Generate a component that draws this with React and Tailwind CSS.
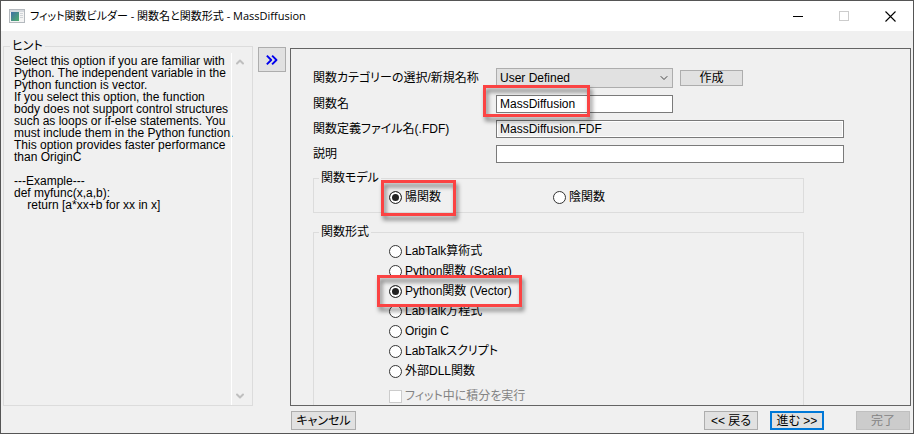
import { useState } from 'react'
import { ChevronDown, ChevronUp, ChevronsRight } from 'lucide-react'

const hint = `Select this option if you are familiar with
Python. The independent variable in the
Python function is vector.
If you select this option, the function
body does not support control structures
such as loops or if-else statements. You
must include them in the Python function.
This option provides faster performance
than OriginC

---Example---
def myfunc(x,a,b):
    return [a*xx+b for xx in x]`

const models = [
  { id: 'explicit', label: '陽関数', mark: true },
  { id: 'implicit', label: '陰関数' }
]

const forms = [
  { id: 'labtalk-expr', label: 'LabTalk算術式' },
  { id: 'py-scalar', label: 'Python関数 (Scalar)' },
  { id: 'py-vector', label: 'Python関数 (Vector)', mark: true },
  { id: 'labtalk-eq', label: 'LabTalk方程式' },
  { id: 'origin-c', label: 'Origin C' },
  { id: 'labtalk-script', label: 'LabTalkスクリプト' },
  { id: 'dll', label: '外部DLL関数' }
]

// red callout frame, sits over the control it points at
function Mark({ className }) {
  return (
    <span className={`absolute z-10 pointer-events-none border-3 border-[#fb4343] drop-shadow-[2px_4px_2px_rgba(0,0,0,0.5)] ${className}`} />
  )
}

function Radio({ name, label, checked, onChange, children }) {
  return (
    <label className="relative flex items-center gap-[3px] whitespace-nowrap">
      <input
        type="radio"
        name={name}
        checked={checked}
        onChange={onChange}
        className="appearance-none size-[13px] shrink-0 rounded-full border border-[#333333] bg-white checked:bg-[#222222] checked:shadow-[inset_0_0_0_2px_white]"
      />
      {label}
      {children}
    </label>
  )
}

function TitleBar() {
  return (
    <header className="flex h-[30px] shrink-0 items-center bg-white pl-2">
      <svg width="16" height="14" viewBox="0 0 16 14" className="mr-[5px] shrink-0">
        <defs>
          <linearGradient id="app" x1="0" y1="0" x2="1" y2="1">
            <stop offset="0" stopColor="#3f6fa6" />
            <stop offset="1" stopColor="#4fae6b" />
          </linearGradient>
        </defs>
        <rect x="0.5" y="0.5" width="15" height="13" fill="#f4f4f4" stroke="#b4b9be" />
        <rect x="1" y="1" width="14" height="2" fill="#d5d9de" />
        <rect x="2" y="3" width="8" height="9" fill="url(#app)" />
        <path d="M11 4.5h3M11 6.5h3M11 8.5h3" stroke="#d0d4d8" />
      </svg>
      <h1 className="flex-1 truncate font-['Open_Sans','Noto_Sans_CJK_JP',sans-serif] text-[11px]">
        フィット関数ビルダー - 関数名と関数形式 - MassDiffusion
      </h1>
      <button aria-label="最小化" className="flex h-full w-[46px] items-center justify-center">
        <svg width="10" height="10" viewBox="0 0 10 10"><path d="M0 5.5h10" stroke="black" /></svg>
      </button>
      <button aria-label="最大化" disabled className="flex h-full w-[46px] items-center justify-center">
        <svg width="10" height="10" viewBox="0 0 10 10"><rect x="0.5" y="0.5" width="9" height="9" fill="none" stroke="#cccccc" /></svg>
      </button>
      <button aria-label="閉じる" className="flex h-full w-[46px] items-center justify-center">
        <svg width="11" height="11" viewBox="0 0 11 11"><path d="M0.5 0.5l10 10M10.5 0.5l-10 10" stroke="black" strokeWidth="1.1" /></svg>
      </button>
    </header>
  )
}

export default function App() {
  const [category, setCategory] = useState('User Defined')
  const [name, setName] = useState('MassDiffusion')
  const [description, setDescription] = useState('')
  const [model, setModel] = useState('explicit')
  const [form, setForm] = useState('py-vector')

  return (
    <div className="flex h-screen flex-col overflow-hidden border border-[#555555] bg-[#f0f0f0] font-['Liberation_Sans','Noto_Sans_CJK_JP',sans-serif] text-xs leading-[14px] text-black [font-feature-settings:'palt']">
      <TitleBar />

      <main className="flex min-h-0 flex-1 px-[2px] pt-2">
        <fieldset className="flex w-[250px] min-w-0 shrink-0 border border-[#dcdcdc]">
          <legend className="ml-[6px] px-[2px]">ヒント</legend>
          <p className="min-w-0 flex-1 whitespace-pre pl-[10px] pt-[2px] leading-3">{hint}</p>
          <div className="flex w-[21px] shrink-0 flex-col items-center justify-between border-l border-white py-[3px] pr-1 text-[#bfbfbf]">
            <ChevronUp size={12} strokeWidth={4} />
            <ChevronDown size={12} strokeWidth={4} />
          </div>
        </fieldset>

        <button aria-label="ヒントを切り替え" className="ml-[5px] mt-2 flex h-[25px] w-7 shrink-0 items-center justify-center border border-[#adadad] bg-[#e1e1e1] text-[#0000ee]">
          <ChevronsRight size={18} strokeWidth={2.5} strokeLinecap="square" />
        </button>

        <section className="ml-1 mt-[9px] min-w-0 flex-1 overflow-hidden border border-[#646464] pl-[22px] pr-[66px] pt-[19px]">
          <div className="grid grid-cols-[183px_1fr] items-center gap-y-[7px]">
            <label htmlFor="category">関数カテゴリーの選択/新規名称</label>
            <div className="flex items-center gap-[7px]">
              <div className="relative">
                <select
                  id="category"
                  value={category}
                  onChange={e => setCategory(e.target.value)}
                  className="block h-5 w-[177px] appearance-none border border-[#adadad] bg-[#e1e1e1] pl-[3px]">
                  <option>User Defined</option>
                </select>
                <ChevronDown size={12} strokeWidth={2} className="pointer-events-none absolute right-[3px] top-1 text-[#444444]" />
              </div>
              <button className="flex h-4 w-[63px] items-center justify-center border border-[#adadad] bg-[#e1e1e1]">作成</button>
            </div>

            <label htmlFor="name">関数名</label>
            <div className="relative">
              <input
                id="name"
                value={name}
                onChange={e => setName(e.target.value)}
                className="block h-[18px] w-[177px] border border-[#7a7a7a] bg-white px-[3px]"
              />
              <Mark className="-left-[13px] -top-[10px] h-8 w-[107px]" />
            </div>

            <label htmlFor="fdf">関数定義ファイル名(.FDF)</label>
            <input
              id="fdf"
              readOnly
              value={`${name}.FDF`}
              className="block h-[18px] w-full border border-[#7a7a7a] px-[3px] shadow-[inset_0_0_0_1px_white]"
            />

            <label htmlFor="description">説明</label>
            <input
              id="description"
              value={description}
              onChange={e => setDescription(e.target.value)}
              className="block h-[18px] w-full border border-[#7a7a7a] bg-white px-[3px]"
            />
          </div>

          <fieldset className="mr-10 mt-2 border border-[#dcdcdc] pb-2 pl-[75px] pt-[5px]">
            <legend className="-ml-[70px] px-[2px]">関数モデル</legend>
            <div className="grid grid-cols-[164px_1fr]">
              {models.map(m => (
                <Radio key={m.id} name="model" label={m.label} checked={model === m.id} onChange={() => setModel(m.id)}>
                  {m.mark && <Mark className="-left-2 -top-[10px] h-9 w-[75px]" />}
                </Radio>
              ))}
            </div>
          </fieldset>

          <fieldset className="mr-10 mt-3 border border-[#dcdcdc] pb-5 pl-[75px] pt-[2px]">
            <legend className="-ml-[70px] px-[2px]">関数形式</legend>
            <div className="grid auto-rows-[20px]">
              {forms.map(f => (
                <Radio key={f.id} name="form" label={f.label} checked={form === f.id} onChange={() => setForm(f.id)}>
                  {f.mark && <Mark className="-left-3 -top-[6px] h-8 w-[145px]" />}
                </Radio>
              ))}
            </div>
            <label className="mt-[5px] flex h-5 items-center gap-[3px] text-[#838383]">
              <input type="checkbox" disabled className="size-[13px] appearance-none border border-[#cccccc] bg-white" />
              フィット中に積分を実行
            </label>
          </fieldset>
        </section>
      </main>

      <footer className="flex shrink-0 pb-[3px] pl-[290px] pr-[3px] pt-[5px]">
        <button className="flex h-[19px] w-[65px] items-center justify-center border border-[#adadad] bg-[#e1e1e1]">キャンセル</button>
        <button className="ml-auto flex h-[19px] w-[54px] items-center justify-center border border-[#adadad] bg-[#e1e1e1]">&lt;&lt; 戻る</button>
        <button className="ml-3 flex h-[19px] w-[54px] items-center justify-center border-2 border-[#0078d7] bg-[#e1e1e1]">進む &gt;&gt;</button>
        <button disabled className="ml-8 flex h-[19px] w-[54px] items-center justify-center border border-[#bfbfbf] bg-[#cccccc] text-[#838383]">完了</button>
      </footer>
    </div>
  )
}
